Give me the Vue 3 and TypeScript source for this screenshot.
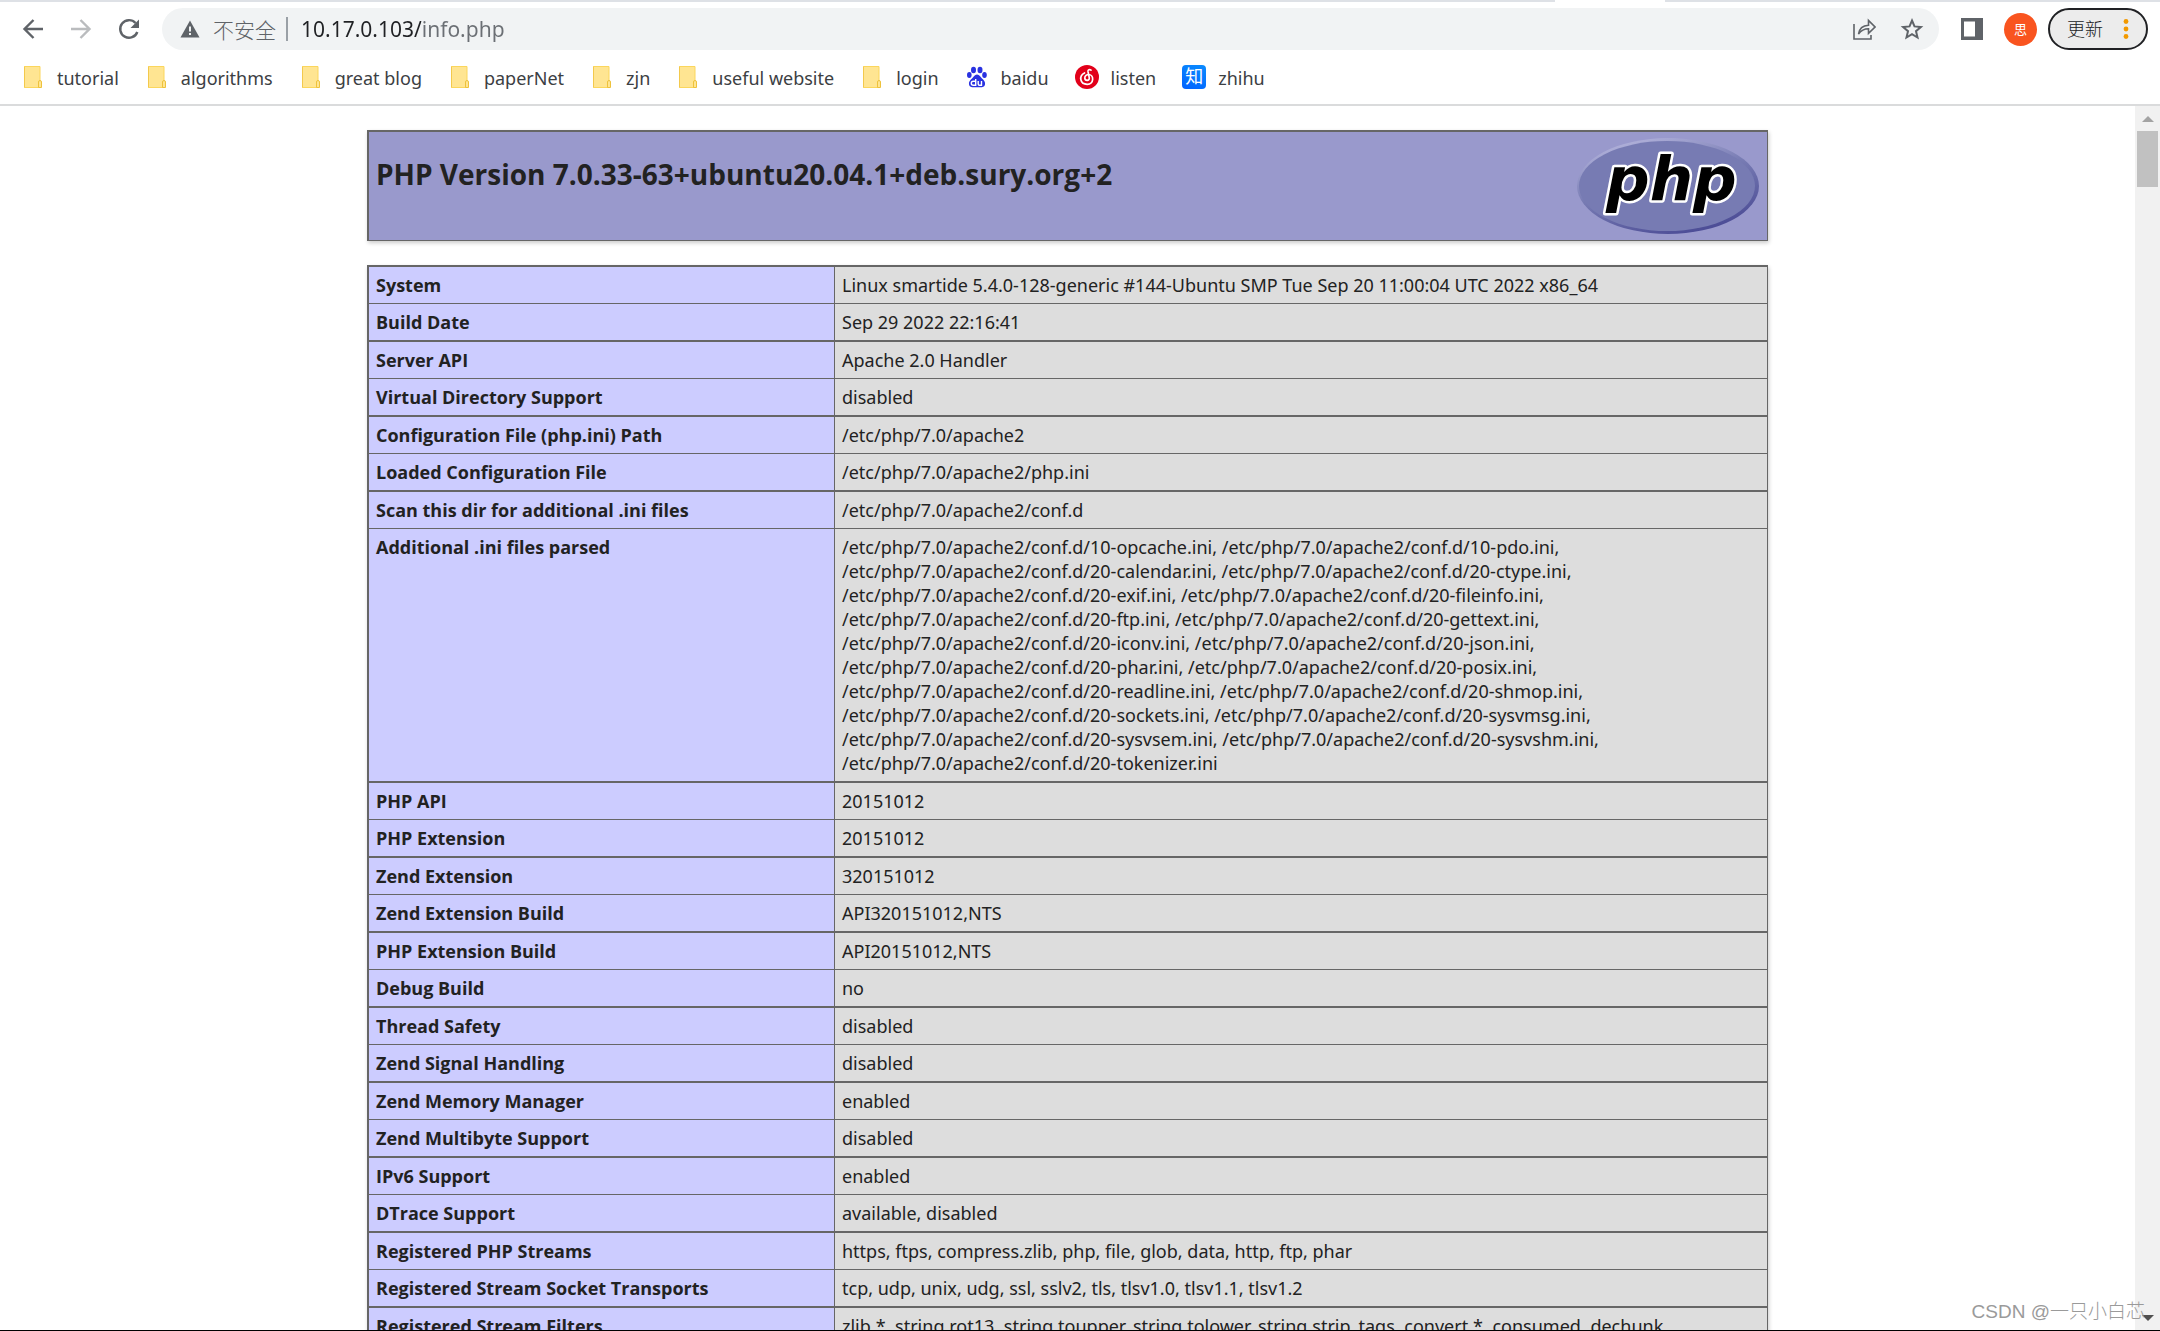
<script setup lang="ts">
import { ref } from 'vue'

interface Bookmark {
  label: string
  icon: 'folder' | 'baidu' | 'netease' | 'zhihu'
}

interface InfoRow {
  name: string
  lines: string[]
}

const address = ref('10.17.0.103/info.php')

const bookmarks: Bookmark[] = [
  { label: 'tutorial', icon: 'folder' },
  { label: 'algorithms', icon: 'folder' },
  { label: 'great blog', icon: 'folder' },
  { label: 'paperNet', icon: 'folder' },
  { label: 'zjn', icon: 'folder' },
  { label: 'useful website', icon: 'folder' },
  { label: 'login', icon: 'folder' },
  { label: 'baidu', icon: 'baidu' },
  { label: 'listen', icon: 'netease' },
  { label: 'zhihu', icon: 'zhihu' },
]

const ini = (...names: string[]): string =>
  names.map((n) => `/etc/php/7.0/apache2/conf.d/${n}.ini`).join(', ')

const rows: InfoRow[] = [
  { name: 'System', lines: ['Linux smartide 5.4.0-128-generic #144-Ubuntu SMP Tue Sep 20 11:00:04 UTC 2022 x86_64'] },
  { name: 'Build Date', lines: ['Sep 29 2022 22:16:41'] },
  { name: 'Server API', lines: ['Apache 2.0 Handler'] },
  { name: 'Virtual Directory Support', lines: ['disabled'] },
  { name: 'Configuration File (php.ini) Path', lines: ['/etc/php/7.0/apache2'] },
  { name: 'Loaded Configuration File', lines: ['/etc/php/7.0/apache2/php.ini'] },
  { name: 'Scan this dir for additional .ini files', lines: ['/etc/php/7.0/apache2/conf.d'] },
  {
    name: 'Additional .ini files parsed',
    lines: [
      ini('10-opcache', '10-pdo') + ',',
      ini('20-calendar', '20-ctype') + ',',
      ini('20-exif', '20-fileinfo') + ',',
      ini('20-ftp', '20-gettext') + ',',
      ini('20-iconv', '20-json') + ',',
      ini('20-phar', '20-posix') + ',',
      ini('20-readline', '20-shmop') + ',',
      ini('20-sockets', '20-sysvmsg') + ',',
      ini('20-sysvsem', '20-sysvshm') + ',',
      ini('20-tokenizer'),
    ],
  },
  { name: 'PHP API', lines: ['20151012'] },
  { name: 'PHP Extension', lines: ['20151012'] },
  { name: 'Zend Extension', lines: ['320151012'] },
  { name: 'Zend Extension Build', lines: ['API320151012,NTS'] },
  { name: 'PHP Extension Build', lines: ['API20151012,NTS'] },
  { name: 'Debug Build', lines: ['no'] },
  { name: 'Thread Safety', lines: ['disabled'] },
  { name: 'Zend Signal Handling', lines: ['disabled'] },
  { name: 'Zend Memory Manager', lines: ['enabled'] },
  { name: 'Zend Multibyte Support', lines: ['disabled'] },
  { name: 'IPv6 Support', lines: ['enabled'] },
  { name: 'DTrace Support', lines: ['available, disabled'] },
  { name: 'Registered PHP Streams', lines: ['https, ftps, compress.zlib, php, file, glob, data, http, ftp, phar'] },
  { name: 'Registered Stream Socket Transports', lines: ['tcp, udp, unix, udg, ssl, sslv2, tls, tlsv1.0, tlsv1.1, tlsv1.2'] },
  { name: 'Registered Stream Filters', lines: ['zlib.*, string.rot13, string.toupper, string.tolower, string.strip_tags, convert.*, consumed, dechunk'] },
]
</script>

<template>
  <div class="browser">
    <div class="tab-edge"><span class="active-tab"></span></div>

    <header class="toolbar">
      <button class="nav" type="button" aria-label="Back">
        <svg width="24" height="24" viewBox="0 0 24 24" fill="none" stroke="#5f6368" stroke-width="2.4">
          <path d="M22 12H4M12.5 3L3.500 12l9 9" />
        </svg>
      </button>
      <button class="nav" type="button" aria-label="Forward">
        <svg width="24" height="24" viewBox="0 0 24 24" fill="none" stroke="#babcbe" stroke-width="2.4">
          <path d="M2 12h18M11.500 3l9 9-9 9" />
        </svg>
      </button>
      <button class="nav" type="button" aria-label="Reload">
        <svg width="24" height="24" viewBox="0 0 24 24" fill="none" stroke="#5f6368" stroke-width="2.4">
          <path d="M20.300 15A8.800 8.800 0 1 1 18.500 6" />
          <path d="M22 2.500v8.500h-8.500z" fill="#5f6368" stroke="none" />
        </svg>
      </button>

      <div class="omnibox">
        <svg class="warn" width="20" height="18" viewBox="0 0 20 18">
          <path d="M10 0.500L19.500 17.500H0.500z" fill="#5f6368" />
          <path d="M9 6.500h2v5H9zM9 13h2v2H9z" fill="#f1f3f4" />
        </svg>
        <span class="insecure">不安全</span>
        <span class="divider"></span>
        <input v-model="address" class="url" type="text" aria-label="Address" spellcheck="false" />
        <button class="pill-btn" type="button" aria-label="Share">
          <svg width="24" height="24" viewBox="0 0 24 24" fill="none" stroke="#5f6368" stroke-width="1.600">
            <path d="M2 7v15h17v-4" />
            <path d="M6.500 17c.8-5.500 4-8.500 10-8.800V3.500L23 10l-6.500 6.300v-4.500C12 11.800 9 13.500 6.500 17z" />
          </svg>
        </button>
        <button class="pill-btn" type="button" aria-label="Bookmark this page">
          <svg width="24" height="24" viewBox="0 0 24 24" fill="none" stroke="#5f6368" stroke-width="2">
            <path d="M12 3.500l2.500 5.900 6.400.6-4.900 4.200 1.500 6.300-5.500-3.400-5.500 3.400L8 14.200 3.100 10l6.400-.6z" />
          </svg>
        </button>
      </div>

      <button class="panel" type="button" aria-label="Side panel">
        <svg width="22" height="22" viewBox="0 0 22 22">
          <path d="M0 0h22v22H0zM3 3.500v15h11v-15z" fill="#5f6368" fill-rule="evenodd" />
        </svg>
      </button>
      <button class="avatar" type="button">思</button>
      <button class="update" type="button">
        更新
        <svg width="6" height="22" viewBox="0 0 6 22" fill="#f29900">
          <circle cx="3" cy="3.500" r="2.400" />
          <circle cx="3" cy="11" r="2.400" />
          <circle cx="3" cy="18.500" r="2.400" />
        </svg>
      </button>
    </header>

    <nav class="bookmarks">
      <a v-for="b in bookmarks" :key="b.label" href="#" class="bookmark">
        <svg v-if="b.icon === 'folder'" width="24" height="24" viewBox="0 0 24 24">
          <path d="M3.500 1.500h15.500v21H3.500z" fill="#ffe592" stroke="#fbd65c" />
          <path d="M3.500 1.500v21" stroke="#f3c94c" />
          <path d="M17.500 22.500v-5.500a1.500 1.500 0 0 1 3 0v5.500z" fill="#ffe592" stroke="#eec23c" />
        </svg>
        <svg v-else-if="b.icon === 'baidu'" width="24" height="24" viewBox="0 0 24 24">
          <g fill="#2932e1">
            <ellipse cx="8.500" cy="5" rx="2.500" ry="3.200" />
            <ellipse cx="15" cy="5" rx="2.500" ry="3.200" />
            <ellipse cx="4.300" cy="10" rx="2.300" ry="2.900" />
            <ellipse cx="19.500" cy="10" rx="2.300" ry="2.900" />
            <path d="M12 9.500c2.500 0 3.500 2.500 5 4 2 1.800 3.500 3.300 3 6-.6 3-3.500 3-8 2.700-4.500.3-7.400.3-8-2.700-.5-2.700 1-4.200 3-6 1.500-1.500 2.500-4 5-4z" />
          </g>
          <path d="M10.700 14v6.300H8.300a1.700 1.700 0 0 1 0-4h2.400M13.200 16v3a1.300 1.300 0 0 0 1.300 1.300h2V16" fill="none" stroke="#fff" stroke-width="1.400" />
        </svg>
        <svg v-else-if="b.icon === 'netease'" width="24" height="24" viewBox="0 0 24 24">
          <circle cx="12" cy="12" r="12" fill="#e2001a" />
          <path d="M16 5.200c-1.300-1.100-3.300-.5-3 1.300l1.300 6.300c.3 3.300-4.300 3.300-4.500.3-.1-2.300 2-3.700 4.200-3.600 5 .5 5.300 9.500-1.800 9.800C5 19.300 3.500 11 9.500 8" fill="none" stroke="#fff" stroke-width="1.700" stroke-linecap="round" />
        </svg>
        <span v-else class="zhihu-icon" aria-hidden="true">知</span>
        <span class="bookmark-label">{{ b.label }}</span>
      </a>
    </nav>

    <div class="viewport">
      <main class="page">
        <div class="banner">
          <h1>PHP Version 7.0.33-63+ubuntu20.04.1+deb.sury.org+2</h1>
          <svg class="logo" width="182" height="96" viewBox="0 0 182 96" role="img" aria-label="PHP logo">
            <defs>
              <linearGradient id="rim" x1="0.250" y1="0" x2="0.750" y2="1">
                <stop offset="0" stop-color="#b4b4dc" />
                <stop offset="0.450" stop-color="#777bb3" />
                <stop offset="1" stop-color="#484893" />
              </linearGradient>
            </defs>
            <ellipse cx="91" cy="48" rx="91" ry="48" fill="url(#rim)" />
            <ellipse cx="90" cy="48" rx="88" ry="45" fill="#777bb3" />
            <text x="29" y="62" class="logo-text">php</text>
          </svg>
        </div>

        <table class="info">
          <tbody>
            <tr v-for="row in rows" :key="row.name">
              <th scope="row">{{ row.name }}</th>
              <td>{{ row.lines.join('\n') }}</td>
            </tr>
          </tbody>
        </table>
      </main>

      <div class="scrollbar">
        <button type="button" class="arrow" aria-label="Scroll up">
          <svg width="12" height="6" viewBox="0 0 12 6"><path d="M0 6l6-6 6 6z" fill="#a3a3a3" /></svg>
        </button>
        <div class="thumb"></div>
        <button type="button" class="arrow down" aria-label="Scroll down">
          <svg width="12" height="6" viewBox="0 0 12 6"><path d="M0 0l6 6 6-6z" fill="#505050" /></svg>
        </button>
      </div>
      <span class="watermark">CSDN @一只小白芯</span>
    </div>
  </div>
</template>

<style>
body {
  margin: 0;
  background: #fff;
}
</style>

<style scoped>
.browser {
  box-sizing: border-box;
  display: flex;
  flex-direction: column;
  height: 100vh;
  overflow: hidden;
  border-bottom: 1px solid #000;
  color: #222;
  font-family: "Noto Sans", "Noto Sans CJK SC", sans-serif;
  font-size: 18px;
  line-height: 24px;
}

button {
  display: flex;
  align-items: center;
  justify-content: center;
  padding: 0;
  border: 0;
  background: none;
  font: inherit;
}

svg {
  display: block;
  flex: none;
}

.tab-edge {
  display: flex;
  flex: none;
  height: 2px;
  padding-left: 72%;
  background: #dee1e6;
}

.active-tab {
  width: 110px;
  background: #fff;
}

.toolbar {
  display: flex;
  flex: none;
  align-items: center;
  height: 42px;
  padding: 6px 12px 0 9px;
}

.nav {
  width: 48px;
  height: 42px;
}

.omnibox {
  display: flex;
  flex: 1;
  align-items: center;
  height: 42px;
  margin: 0 22px 0 9px;
  padding: 0 15px 0 18px;
  border-radius: 21px;
  background: #f1f3f4;
}

.insecure {
  margin-left: 13px;
  color: #5f6368;
  font-family: "Noto Sans CJK SC", sans-serif;
  font-size: 21px;
  font-weight: 300;
}

.divider {
  width: 2px;
  height: 24px;
  margin: 0 13px 0 10px;
  background: #9aa0a6;
}

.url {
  flex: 1;
  min-width: 0;
  padding: 0;
  border: 0;
  outline: 0;
  background: linear-gradient(90deg, #202124 120px, #6b6f74 120px);
  background-clip: text;
  color: transparent;
  font: inherit;
  font-size: 21px;
  line-height: 30px;
}

.pill-btn {
  width: 24px;
  height: 24px;
  margin-left: 24px;
}

.avatar {
  width: 33px;
  height: 33px;
  margin: 0 11px 0 21px;
  border-radius: 50%;
  background: #f9541f;
  color: #fff;
  font-size: 13px;
}

.update {
  box-sizing: border-box;
  justify-content: space-between;
  width: 100px;
  height: 42px;
  padding: 0 17px;
  border: 2px solid #202124;
  border-radius: 21px;
  background: #ececec;
  color: #202124;
  font-weight: 300;
}

.bookmarks {
  display: flex;
  flex: none;
  gap: 26px;
  align-items: center;
  height: 54px;
  padding: 0 21px;
  border-bottom: 2px solid #dadbdc;
}

.bookmark {
  display: flex;
  gap: 12px;
  align-items: center;
  color: #3c4043;
  text-decoration: none;
}

.bookmark-label {
  padding-top: 2px;
}

.zhihu-icon {
  width: 24px;
  height: 24px;
  border-radius: 4px;
  background: linear-gradient(20deg, #0062ff, #0a8cff);
  color: #fff;
  font-size: 18px;
  line-height: 23px;
  text-align: center;
}

.viewport {
  position: relative;
  display: flex;
  flex: 1;
  min-height: 0;
}

.page {
  flex: 1;
  min-width: 0;
  padding: 24px 0;
  overflow: hidden;
}

.banner,
.info {
  box-sizing: border-box;
  width: 1401px;
  max-width: 100%;
  margin: 0 auto 24px;
  border: solid #666;
  border-width: 0 1px 1px 2px;
  box-shadow: 1px 2px 4px #ccc;
}

.banner {
  display: flex;
  align-items: flex-start;
  justify-content: space-between;
  padding: 6px 8px 6px 7px;
  border-top-width: 2px;
  background: #99c;
}

h1,
th {
  font-family: "Open Sans", sans-serif;
}

h1 {
  margin: 18px 0 0;
  font-size: 28px;
  line-height: 36px;
}

.logo {
  margin: 0 0 0 16px;
}

.logo-text {
  fill: #000;
  stroke: #fff;
  stroke-width: 5px;
  stroke-linejoin: round;
  paint-order: stroke;
  font: italic bold 61px "DejaVu Sans", sans-serif;
}

.info {
  border-spacing: 0;
}

th,
td {
  padding: 6px 7px;
  border-top: 1px solid #666;
  text-align: left;
  vertical-align: top;
}

tr:nth-child(odd) > * {
  border-top-width: 2px;
}

th {
  width: 451px;
  background: #ccf;
}

td {
  border-left: 1px solid #666;
  background: #ddd;
  white-space: pre-line;
}

.scrollbar {
  display: flex;
  flex: none;
  flex-direction: column;
  align-items: center;
  width: 25px;
  background: #f1f1f1;
}

.arrow {
  width: 25px;
  height: 25px;
}

.thumb {
  width: 21px;
  height: 56px;
  background: #c1c1c1;
}

.down {
  margin-top: auto;
}

.watermark {
  position: absolute;
  right: 15px;
  bottom: 6px;
  color: #9a9a9a;
  font-family: "Liberation Sans", "Noto Sans CJK SC", sans-serif;
  font-size: 19px;
  font-weight: 300;
}
</style>
